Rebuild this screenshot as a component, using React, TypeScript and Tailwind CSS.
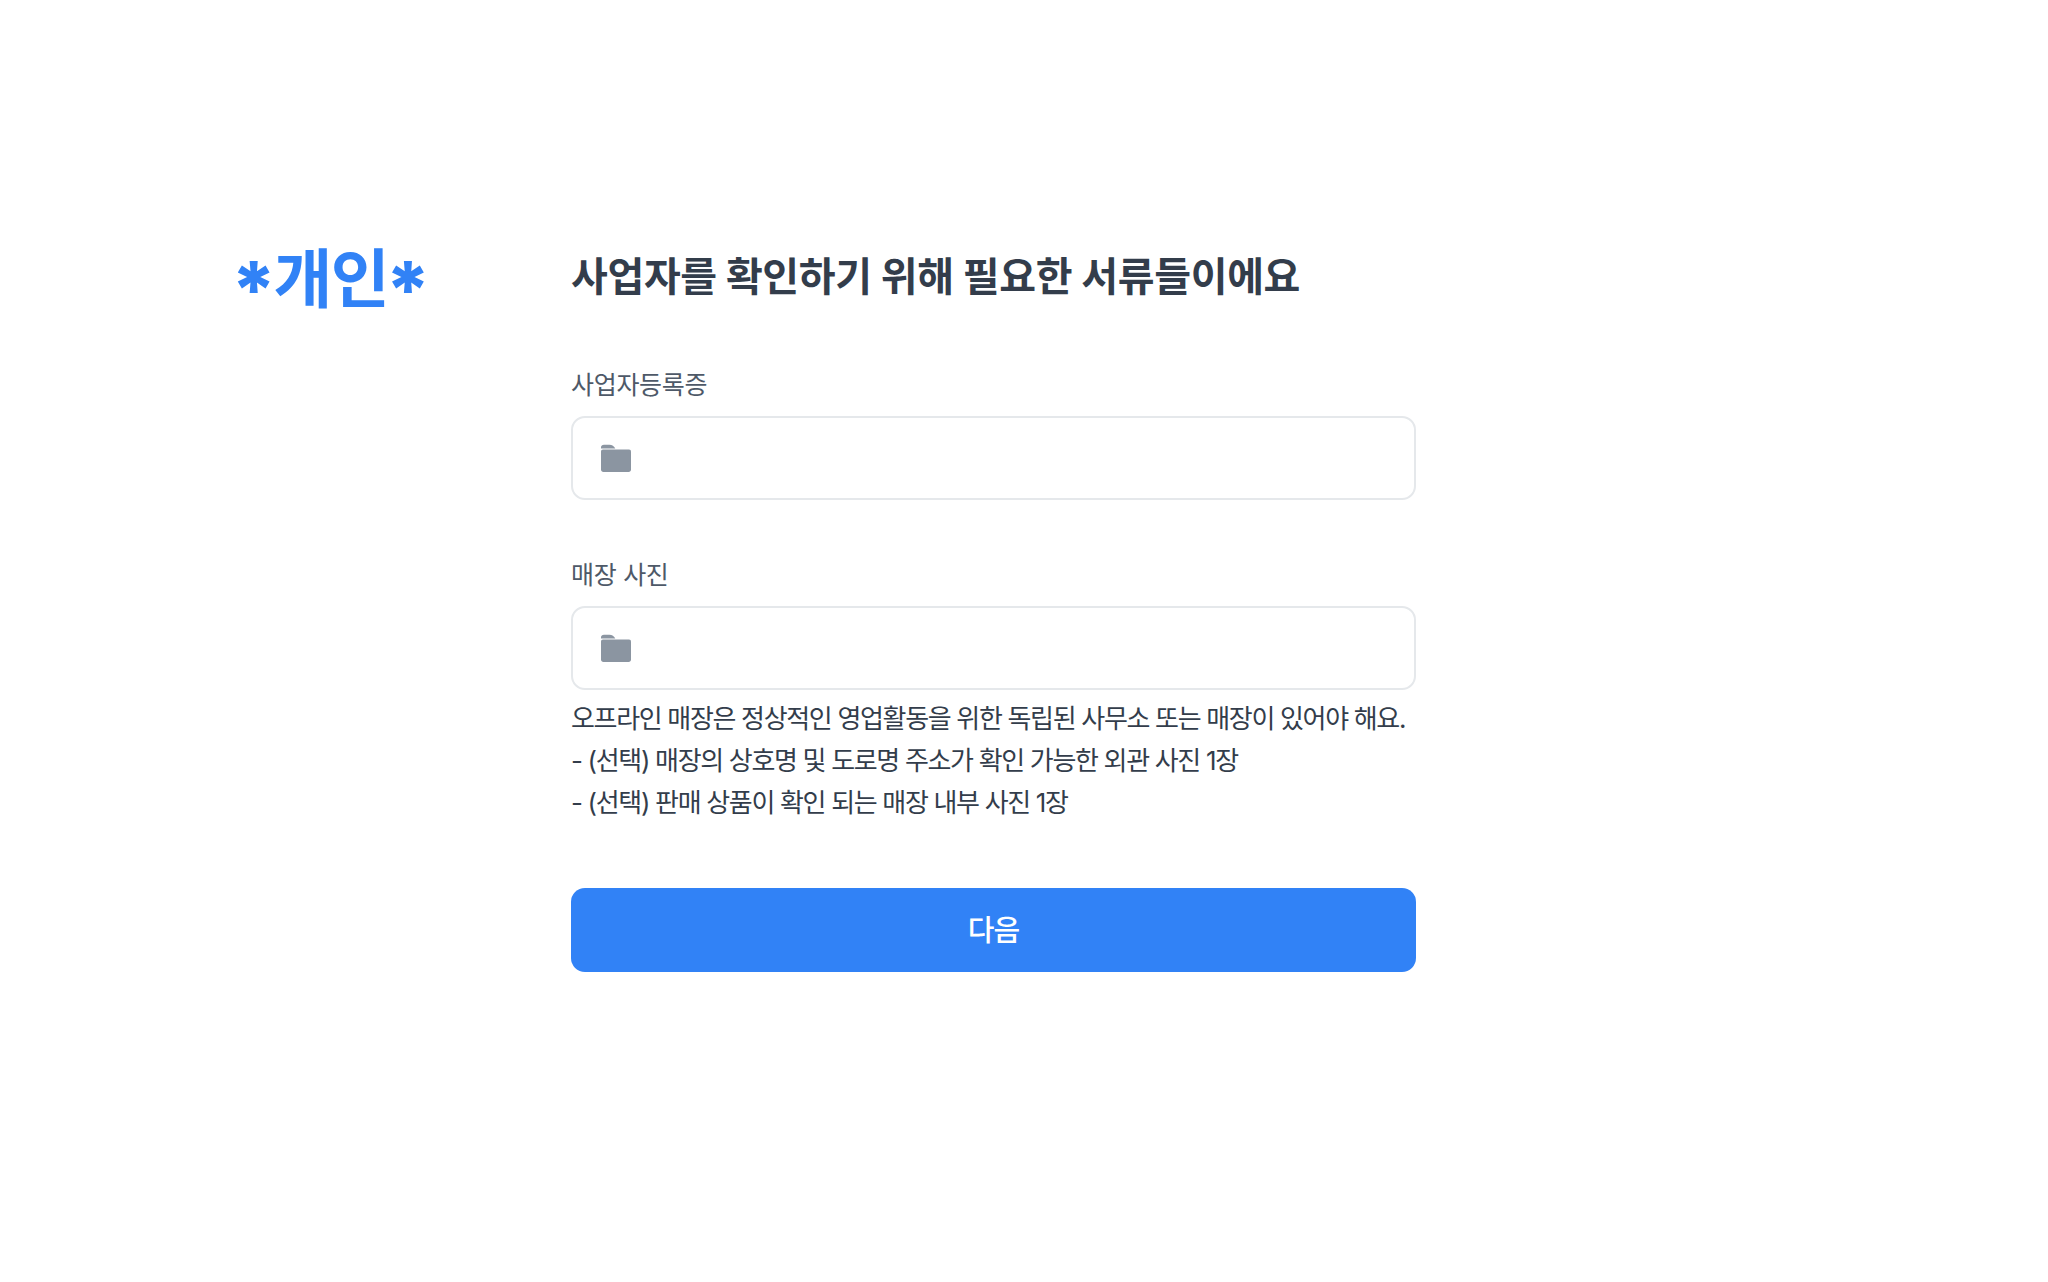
const FONT = "font-['Inter','Noto_Sans_CJK_KR',sans-serif]"

function FileField({ label, className = '' }: { label: string; className?: string }) {
  return (
    <div className={className}>
      <label className="block text-[25px] leading-[36px] tracking-[-0.3px] font-normal text-[#4e5968]">{label}</label>
      <div className="mt-[13px] flex h-[84px] items-center rounded-[14px] border-2 border-[#e5e8eb] bg-white pl-[27px]">
        <svg className="h-[32px] w-[32px] text-[#8b95a1]" viewBox="0 0 32 32" fill="currentColor" aria-hidden="true">
          <path d="M1 5.5C1 3.6 2.2 2.8 4 2.8h5.5c2.6 0 4.6 1.4 5.8 3.7H1V5.5z" />
          <path d="M1 9.5c0-1.2.8-2 2-2h26c1.2 0 2 .8 2 2v18c0 1.4-1 2.4-2.4 2.4H3.4C2 29.9 1 28.9 1 27.5V9.5z" />
        </svg>
      </div>
    </div>
  )
}

function Star() {
  return <span className="inline-block translate-y-[13px] text-[78px] leading-[60px] font-extrabold tracking-normal">*</span>
}

export default function App() {
  return (
    <div className={`${FONT} min-h-screen bg-white flex pl-[235px] pt-[239px]`}>
      <div className="w-[336px] shrink-0">
        <div className="-ml-[4px] flex h-[76px] items-center space-x-[-3px] whitespace-nowrap text-[64px] leading-[76px] font-semibold tracking-[-1.5px] text-[#3182f6]">
          <Star />
          <span className="translate-y-[2px]">개인</span>
          <Star />
        </div>
      </div>
      <main className="w-[845px]">
        <h1 className="text-[40px] leading-[56px] font-bold tracking-[-0.35px] text-[#333d4b] mt-[10px]">
          사업자를 확인하기 위해 필요한 서류들이에요
        </h1>
        <FileField label="사업자등록증" className="mt-[62px]" />
        <FileField label="매장 사진" className="mt-[57px]" />
        <div className="mt-[8px] text-[26px] leading-[42px] tracking-[-1.33px] font-normal text-[#333d4b]">
          <p>오프라인 매장은 정상적인 영업활동을 위한 독립된 사무소 또는 매장이 있어야 해요.</p>
          <p>- (선택) 매장의 상호명 및 도로명 주소가 확인 가능한 외관 사진 1장</p>
          <p>- (선택) 판매 상품이 확인 되는 매장 내부 사진 1장</p>
        </div>
        <button className="mt-[64px] flex h-[84px] w-full items-center justify-center rounded-[14px] bg-[#3182f6] pt-[1px] text-[29px] font-medium tracking-[-1px] text-white">
          다음
        </button>
      </main>
    </div>
  )
}
